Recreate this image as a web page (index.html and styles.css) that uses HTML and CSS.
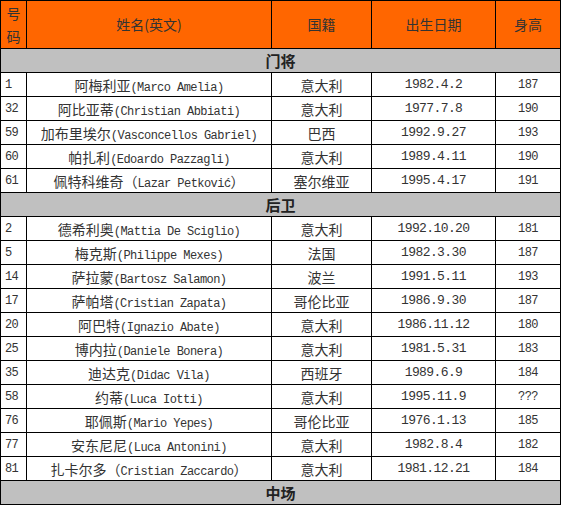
FILE: index.html
```html
<!DOCTYPE html>
<html lang="zh-CN">
<head>
<meta charset="utf-8">
<title>AC米兰球员名单</title>
<link rel="stylesheet" href="styles.css">
</head>
<body>
<table class="roster">
  <colgroup>
    <col class="c-no">
    <col class="c-name">
    <col class="c-nat">
    <col class="c-date">
    <col class="c-ht">
  </colgroup>
  <thead>
    <tr class="head">
      <th>号码</th>
      <th>姓名(英文)</th>
      <th>国籍</th>
      <th>出生日期</th>
      <th>身高</th>
    </tr>
  </thead>
  <tbody>
    <tr class="band"><td colspan="5">门将</td></tr>
    <tr><td class="no">1</td><td>阿梅利亚<span class="en">(Marco Amelia)</span></td><td>意大利</td><td class="date">1982.4.2</td><td class="ht">187</td></tr>
    <tr><td class="no">32</td><td>阿比亚蒂<span class="en">(Christian Abbiati)</span></td><td>意大利</td><td class="date">1977.7.8</td><td class="ht">190</td></tr>
    <tr><td class="no">59</td><td>加布里埃尔<span class="en">(Vasconcellos Gabriel)</span></td><td>巴西</td><td class="date">1992.9.27</td><td class="ht">193</td></tr>
    <tr><td class="no">60</td><td>帕扎利<span class="en">(Edoardo Pazzagli)</span></td><td>意大利</td><td class="date">1989.4.11</td><td class="ht">190</td></tr>
    <tr><td class="no">61</td><td>佩特科维奇（<span class="en">Lazar Petković</span>）</td><td>塞尔维亚</td><td class="date">1995.4.17</td><td class="ht">191</td></tr>
    <tr class="band"><td colspan="5">后卫</td></tr>
    <tr><td class="no">2</td><td>德希利奥<span class="en">(Mattia De Sciglio)</span></td><td>意大利</td><td class="date">1992.10.20</td><td class="ht">181</td></tr>
    <tr><td class="no">5</td><td>梅克斯<span class="en">(Philippe Mexes)</span></td><td>法国</td><td class="date">1982.3.30</td><td class="ht">187</td></tr>
    <tr><td class="no">14</td><td>萨拉蒙<span class="en">(Bartosz Salamon)</span></td><td>波兰</td><td class="date">1991.5.11</td><td class="ht">193</td></tr>
    <tr><td class="no">17</td><td>萨帕塔<span class="en">(Cristian Zapata)</span></td><td>哥伦比亚</td><td class="date">1986.9.30</td><td class="ht">187</td></tr>
    <tr><td class="no">20</td><td>阿巴特<span class="en">(Ignazio Abate)</span></td><td>意大利</td><td class="date">1986.11.12</td><td class="ht">180</td></tr>
    <tr><td class="no">25</td><td>博内拉<span class="en">(Daniele Bonera)</span></td><td>意大利</td><td class="date">1981.5.31</td><td class="ht">183</td></tr>
    <tr><td class="no">35</td><td>迪达克<span class="en">(Didac Vila)</span></td><td>西班牙</td><td class="date">1989.6.9</td><td class="ht">184</td></tr>
    <tr><td class="no">58</td><td>约蒂<span class="en">(Luca Iotti)</span></td><td>意大利</td><td class="date">1995.11.9</td><td class="ht">???</td></tr>
    <tr><td class="no">76</td><td>耶佩斯<span class="en">(Mario Yepes)</span></td><td>哥伦比亚</td><td class="date">1976.1.13</td><td class="ht">185</td></tr>
    <tr><td class="no">77</td><td>安东尼尼<span class="en">(Luca Antonini)</span></td><td>意大利</td><td class="date">1982.8.4</td><td class="ht">182</td></tr>
    <tr><td class="no">81</td><td>扎卡尔多（<span class="en">Cristian Zaccardo</span>）</td><td>意大利</td><td class="date">1981.12.21</td><td class="ht">184</td></tr>
    <tr class="band"><td colspan="5">中场</td></tr>
  </tbody>
</table>
</body>
</html>
```
FILE: styles.css
```css
html, body {
  margin: 0;
  padding: 0;
  background: #ffffff;
}

.roster {
  border-collapse: collapse;
  table-layout: fixed;
  width: 560px;
  font-family: "Noto Sans CJK SC", "Noto Sans", sans-serif;
  font-size: 14px;
  color: #333333;
}

.c-no { width: 26px; }
.c-name { width: 245px; }
.c-nat { width: 100px; }
.c-date { width: 124px; }
.c-ht { width: 65px; }

.roster th,
.roster td {
  border: 1px solid #000000;
  padding: 0;
  text-align: center;
  vertical-align: middle;
  line-height: 18px;
  white-space: nowrap;
  overflow: hidden;
}

.roster .head {
  height: 48px;
  background: #ff6600;
}

.roster .head th {
  font-weight: normal;
  color: #333333;
  white-space: normal;
  line-height: 23px;
}

.roster tbody tr {
  height: 24px;
}

.roster tbody td {
  height: 23px;
}

.roster .band td {
  background: #c0c0c0;
  font-weight: bold;
  font-size: 15px;
  color: #222222;
}

.roster td.no {
  text-align: left;
  padding-left: 4px;
  font-family: "Liberation Mono", monospace;
  font-size: 12px;
  letter-spacing: -0.6px;
}

.roster td.date {
  font-family: "Liberation Mono", monospace;
  font-size: 13px;
  letter-spacing: -0.6px;
}

.roster td.ht {
  font-family: "Liberation Mono", monospace;
  font-size: 12px;
  letter-spacing: -0.6px;
}

.en {
  font-family: "Liberation Mono", monospace;
  font-size: 12px;
  letter-spacing: -0.55px;
  line-height: 1;
}
```
